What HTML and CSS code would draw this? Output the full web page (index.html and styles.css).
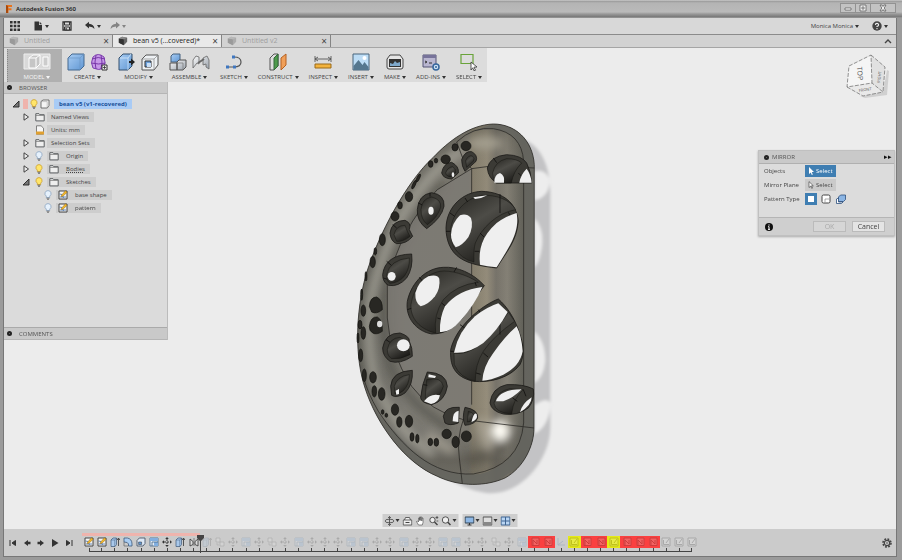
FILE: index.html
```html
<!DOCTYPE html>
<html lang="en">
<head>
<meta charset="utf-8">
<title>Autodesk Fusion 360</title>
<link rel="stylesheet" href="styles.css">
</head>
<body>
<svg class="defs" aria-hidden="true">
  <defs>
    <linearGradient id="blueFace" x1="0" y1="0" x2="1" y2="1"><stop offset="0" stop-color="#a9cdf3"/><stop offset="1" stop-color="#5f96d3"/></linearGradient>
    <linearGradient id="greyFace" x1="0" y1="0" x2="1" y2="1"><stop offset="0" stop-color="#fafafa"/><stop offset="1" stop-color="#9ba3ad"/></linearGradient>
    <symbol id="i-cube" viewBox="0 0 12 12"><path d="M1 3l4-2 6 1v5l-4 4-6-3z" fill="#666"/><path d="M1 3l6 1v7l-6-3z" fill="#333"/><path d="M1 3l4-2 6 1-4 2z" fill="#8a8a8a"/></symbol>
    <symbol id="i-bulb" viewBox="0 0 8 10"><path d="M4 .6a3 3 0 0 1 1.700 5.500V7.500H2.300V6.100A3 3 0 0 1 4 .6z" fill="#ffe56a" stroke="#c7971d" stroke-width=".7"/><path d="M2.500 8.200h3M3 9.300h2" stroke="#555" stroke-width=".8"/></symbol>
    <symbol id="i-bulb-off" viewBox="0 0 8 10"><path d="M4 .6a3 3 0 0 1 1.700 5.500V7.500H2.300V6.100A3 3 0 0 1 4 .6z" fill="#e6f1fc" stroke="#7f9cbb" stroke-width=".7"/><path d="M2.500 8.200h3M3 9.300h2" stroke="#666" stroke-width=".8"/></symbol>
    <symbol id="i-folder" viewBox="0 0 10 10"><path d="M.8 8.900V1.700h3.200l.8 1h4.400v6.200z" fill="#eee" stroke="#5d6063"/><path d="M1 3.500h8" stroke="#777" stroke-width=".7"/></symbol>
    <symbol id="i-doc" viewBox="0 0 10 10"><path d="M1.500 9.200V.8h4.600l2.400 2.400v6z" fill="#f6f6f6" stroke="#666" stroke-width=".8"/><path d="M1 6.500h8V9.500H1z" fill="#e0a030"/></symbol>
    <symbol id="i-component" viewBox="0 0 10 10"><path d="M1 2.500L3 1h6v5.500L7.300 9H1z" fill="#f4f4f4" stroke="#555" stroke-width=".8"/><path d="M1.500 2.600h5.700V9" fill="none" stroke="#999" stroke-width=".5"/></symbol>
    <symbol id="i-open" viewBox="0 0 8 8"><path d="M7 1v6H1z" fill="#777" stroke="#222" stroke-width=".9"/></symbol>
    <symbol id="i-closed" viewBox="0 0 8 8"><path d="M2 .8v6.400L6.500 4z" fill="#eee" stroke="#333" stroke-width=".9"/></symbol>
    <symbol id="t-sketch" viewBox="0 0 10 10"><path d="M1 1h8v8H1z" fill="#f5f5f5" stroke="#444"/><path d="M1.500 4q3-1 4 4M2 7h6" fill="none" stroke="#446fa8" stroke-width=".8"/><path d="M3.500 5.200L7.500.8l1.700 1.400L5.200 6l-2 .8z" fill="#f4b928" stroke="#8a6114" stroke-width=".5"/></symbol>
    <symbol id="t-extrude" viewBox="0 0 10 10"><path d="M1 3l2-2h3.500v6.500L5 9.500H1z" fill="#a9c8ea" stroke="#3d5878" stroke-width=".7"/><path d="M1 3h3.800v6.300M4.800 3l1.700-2" fill="none" stroke="#3d5878" stroke-width=".5"/><path d="M8.500 9V1.500M7.200 3l1.300-2 1.300 2" fill="none" stroke="#333" stroke-width=".8"/></symbol>
    <symbol id="t-fillet" viewBox="0 0 10 10"><path d="M1 1h3.500Q9 2 9 7v2H5.500V7Q5 5 1 5z" fill="#a9cdf3" stroke="#3d5878" stroke-width=".8"/><path d="M1 5v4h4" fill="none" stroke="#666" stroke-width=".7"/></symbol>
    <symbol id="t-shell" viewBox="0 0 10 10"><path d="M1 3.500L3.300 1H9v5.500L7 9H1z" fill="#dbe7f5" stroke="#3d4a5a" stroke-width=".8"/><path d="M2.600 5h3v2.600h-3z" fill="#5f96d3" stroke="#333" stroke-width=".5"/></symbol>
    <symbol id="t-pattern" viewBox="0 0 10 10"><path d="M1 1h8v8H1z" fill="#e5eef8" stroke="#456587" stroke-width=".8"/><path d="M1 1h8v3H1zM5 5h4v4H5z" fill="#82afe0"/><path d="M3 9V5h6" fill="none" stroke="#456587" stroke-width=".8"/></symbol>
    <symbol id="t-move" viewBox="0 0 10 10"><path d="M5 0l1.800 2H3.200zM5 10l1.800-2H3.200zM0 5l2-1.800v3.600zM10 5L8 3.200v3.600z" fill="#333"/><path d="M5 2v6M2 5h6" stroke="#333" stroke-dasharray="2 1"/></symbol>
    <symbol id="t-mirror" viewBox="0 0 10 10"><path d="M1 9V2l3 2.500v3zM9 9V2L6 4.500v3z" fill="#ddd" stroke="#333" stroke-width=".8"/><path d="M5 1v8" stroke="#333" stroke-width=".5"/></symbol>
    <symbol id="t-combine" viewBox="0 0 10 10"><path d="M1 1h4v4H1zM5 5h4v4H5z" fill="#eee" stroke="#555" stroke-width=".8"/><path d="M2 6v2h2" fill="none" stroke="#555" stroke-width=".7"/></symbol>
    <symbol id="t-axis" viewBox="0 0 10 10"><path d="M2 1v7h7M2 8l5-4" fill="none" stroke="#446fa8"/></symbol>
    <symbol id="t-failed" viewBox="0 0 10 10"><path d="M2 1h7v7.500H2z" fill="#ddd" stroke="#333"/><path d="M3 8V3l4 4V3" fill="none" stroke="#333"/></symbol>
    <symbol id="t-plain" viewBox="0 0 10 10"><path d="M1 1h8v8H1z" fill="#f2f2f2" stroke="#333"/><path d="M2.500 3v4.500H8M5 6l3-4" fill="none" stroke="#333"/></symbol>
  </defs>
</svg>

<header class="titlebar">
  <svg class="logo" viewBox="0 0 8 10"><path d="M1 1h6v2H3.500v1.300h3v2h-3V9H1z" fill="#e8731c"/><path d="M1 1l2 1v7L1 9z" fill="#a84a0c"/></svg>
  <h1>Autodesk Fusion 360</h1>
  <div class="winbuttons">
    <button aria-label="Minimize"><svg viewBox="0 0 10 8"><path d="M2 4h6v2H2z" fill="#fff" stroke="#555" stroke-width=".7"/></svg></button>
    <button aria-label="Restore"><svg viewBox="0 0 10 8"><path d="M2 1h6v6H2zM4 3h2v2H4z" fill="#eee" stroke="#555" stroke-width=".7"/></svg></button>
    <button class="close" aria-label="Close"><svg viewBox="0 0 10 8"><path d="M2 1h2l1 1.500L6 1h2L6.200 4 8 7H6L5 5.500 4 7H2l1.800-3z" fill="#eee" stroke="#555" stroke-width=".7"/></svg></button>
  </div>
</header>

<div class="window">
  <nav class="appbar" aria-label="File">
    <button aria-label="Data panel"><svg class="i10" viewBox="0 0 10 10"><path d="M0 0h2.600v2.600H0zM3.700 0h2.600v2.600H3.700zM7.400 0H10v2.600H7.400zM0 3.700h2.600v2.600H0zM3.700 3.700h2.600v2.600H3.700zM7.400 3.700H10v2.600H7.400zM0 7.400h2.600V10H0zM3.700 7.400h2.600V10H3.700zM7.400 7.400H10V10H7.400z" fill="#333"/></svg></button>
    <button aria-label="File"><svg class="i10" viewBox="0 0 10 10"><path d="M1.500.5H6V4h3v5.500H1.500z" fill="#333"/><path d="M6.700.7L9 3.300H6.700z" fill="#333"/></svg><i class="caret"></i></button>
    <button aria-label="Save"><svg class="i10" viewBox="0 0 10 10"><path d="M1 1h8v8H1z" fill="none" stroke="#333" stroke-width="1.300"/><path d="M2.500 1h5v3h-5zM2.500 6h5v3h-5z" fill="#d8d8d8" stroke="#333"/><path d="M3.500 7h1.200v2H3.500z" fill="#333"/></svg></button>
    <div class="history">
      <button aria-label="Undo"><svg class="i10" viewBox="0 0 10 10"><path d="M0 4l4-3.200v2q5 .2 5.500 5.200Q8 5.500 4 5.400v2z" fill="#333"/></svg><i class="caret"></i></button>
      <button class="dim" aria-label="Redo"><svg class="i10" viewBox="0 0 10 10"><path d="M10 4L6 .8v2Q1 3 .5 8 2 5.500 6 5.400v2z" fill="#333"/></svg><i class="caret"></i></button>
    </div>
    <div class="account">
      <button>Monica Monica<i class="caret"></i></button>
      <button aria-label="Help"><svg class="i10" viewBox="0 0 10 10"><circle cx="5" cy="5" r="4.700" fill="#444"/><path d="M3.400 4Q3.400 2.400 5 2.400T6.600 4Q6.600 5 5 5.400V6M5 7v1.200" fill="none" stroke="#eee" stroke-width="1.100"/></svg><i class="caret"></i></button>
    </div>
  </nav>

  <div class="tabs">
    <div class="tab"><svg class="i10"><use href="#i-cube"/></svg><span>Untitled</span><button aria-label="Close tab">×</button></div>
    <div class="tab current"><svg class="i10"><use href="#i-cube"/></svg><span>bean v5 (...covered)*</span><button aria-label="Close tab">×</button></div>
    <div class="tab"><svg class="i10"><use href="#i-cube"/></svg><span>Untitled v2</span><button aria-label="Close tab">×</button></div>
    <button class="collapse" aria-label="Collapse toolbar"><svg viewBox="0 0 8 6"><path d="M1 5l3-3 3 3" fill="none" stroke="#444" stroke-width="1.400"/></svg></button>
  </div>

  <main class="canvas">
    <svg class="scene" viewBox="4 48 892 481" role="img" aria-label="Bean model">
      <defs>
        <linearGradient id="metal" x1="0" y1="0" x2="555" y2="0" gradientUnits="userSpaceOnUse">
          <stop offset="0" stop-color="#5f5e57"/><stop offset=".3" stop-color="#7b7972"/><stop offset=".64" stop-color="#7c7970"/><stop offset=".66" stop-color="#857e6c"/><stop offset=".74" stop-color="#958d7b"/><stop offset=".79" stop-color="#77736a"/><stop offset=".85" stop-color="#858176"/><stop offset=".93" stop-color="#63625a"/><stop offset="1" stop-color="#63635c"/>
        </linearGradient>
        <linearGradient id="endShade" x1="0" y1="18" x2="0" y2="1100" gradientUnits="userSpaceOnUse">
          <stop offset="0" stop-color="#4f4d45" stop-opacity=".45"/><stop offset=".1" stop-color="#6e6a5e" stop-opacity=".1"/><stop offset=".82" stop-color="#777" stop-opacity="0"/><stop offset=".93" stop-color="#4a4841" stop-opacity=".45"/><stop offset="1" stop-color="#55534b" stop-opacity=".3"/>
        </linearGradient>
        <linearGradient id="bore" x1="0" y1="0" x2=".6" y2="1"><stop offset="0" stop-color="#24231f"/><stop offset=".45" stop-color="#4d4c47"/><stop offset="1" stop-color="#1d1c19"/></linearGradient>
        <filter id="soft" x="-50%" y="-50%" width="200%" height="200%"><feGaussianBlur stdDeviation="13"/></filter>
        <filter id="edge"><feGaussianBlur stdDeviation="4"/></filter>
        <path id="outline" d="M553 140C548 65 495 18 430 18C360 20 295 70 250 118C170 190 85 350 48 470C15 590 15 720 45 810C80 920 165 1035 262 1075C330 1108 410 1105 465 1080C520 1050 552 985 552 930Z"/>
        <clipPath id="bodyClip"><use href="#outline"/></clipPath>
      </defs>
      <g transform="translate(350 118) scale(.3333)">
        <g filter="url(#edge)">
          <path d="M500 60C575 70 602 150 601 230V930C600 1020 520 1128 420 1126C360 1122 300 1090 270 1060L540 950Z" fill="#c3c3c5"/>
          <path d="M553 160Q590 150 600 190Q595 240 553 247ZM553 300Q582 330 576 385Q570 430 553 450ZM553 640Q586 670 586 730Q580 780 553 795ZM553 862Q590 835 602 855Q598 925 553 948Z" fill="#ededed"/>
        </g>
        <g clip-path="url(#bodyClip)">
          <path d="M0 0h560v1120H0z" fill="url(#metal)"/>
          <path d="M0 0h560v1120H0z" fill="url(#endShade)"/>
          <g filter="url(#soft)" fill="none">
            <path d="M340 95Q240 150 150 300Q90 420 62 540Q45 660 75 790Q130 930 250 1010" stroke="#a9a89c" stroke-width="24" opacity=".8"/>
            <path d="M280 190Q160 320 105 480Q90 620 120 740Q170 860 300 930" stroke="#4a4941" stroke-width="20" opacity=".65"/>
            <path d="M330 60Q200 160 110 330Q40 480 26 600Q22 720 60 820" stroke="#45443d" stroke-width="12" opacity=".7"/>
            <path d="M350 1025Q450 1010 490 940" stroke="#55524a" stroke-width="30" opacity=".7"/>
            <path d="M395 900Q400 980 430 990M230 950l80 50" stroke="#b3aea0" stroke-width="26" opacity=".7"/>
            <ellipse cx="450" cy="938" rx="28" ry="32" fill="#fffdf5"/>
            <ellipse cx="405" cy="75" rx="55" ry="20" fill="#aaa596" opacity=".8"/>
          </g>
          <path d="M365 150L262 215Q150 330 112 500V600Q118 700 185 805Q240 880 340 905L365 860Z" fill="#7e7b75" opacity=".7"/>
          <path d="M520 125V920Q505 1040 390 1068Q280 1080 180 990L60 860L150 1060L400 1120L570 1000V60L450 10L340 50Q430 18 480 50Q520 80 520 125Z" fill="#65655f" opacity=".85"/>
        </g>
        <g fill="none" stroke="#2c2b27" stroke-width="2.400">
          <use href="#outline"/>
          <path d="M320 72Q370 25 430 32Q515 45 521 130V915Q510 1045 370 1068C245 1075 155 985 85 880Q50 820 40 775M365 152L425 144L553 150M365 152V860M320 72L340 125L365 152L262 215Q150 330 112 500V600Q118 700 185 805Q240 880 340 905L552 930M340 905Q320 960 328 1020L337 1097"/>
        </g>
        <g fill="#3b3a35" stroke="#1d1c19" stroke-width="2.500">
          <path d="M288 330C290 265 340 222 395 220C460 222 500 255 505 310C500 370 470 400 440 450C400 445 360 440 330 420C300 400 288 365 288 330Z"/>
          <path d="M403 503C370 465 320 445 280 448C230 450 185 490 172 550C165 600 200 640 245 648C290 648 320 625 345 590C370 560 380 530 403 503Z"/>
          <path d="M445 543C400 560 320 620 302 695C300 740 310 775 370 790C420 795 480 780 510 740C525 710 520 680 510 650C495 600 470 565 445 543Z"/>
          <path d="M412 150Q420 115 470 110Q515 112 530 135Q543 160 545 195H440Q415 180 412 150Z"/>
          <path d="M420 855Q425 810 470 800Q520 798 550 813Q555 845 535 870Q500 895 460 888Q425 880 420 855Z"/>
          <path d="M202 275Q205 230 245 224Q285 230 282 265Q275 300 230 332Q200 310 202 275Z"/>
          <path d="M120 345Q125 308 165 307Q185 315 178 335L188 355Q170 378 140 377Q122 370 120 345Z"/>
          <path d="M275 165Q280 135 305 133Q328 145 325 165L305 183Q280 182 275 165Z"/>
          <path d="M335 125Q345 98 365 101Q385 112 378 130L345 160Q335 145 335 125Z"/>
          <path d="M98 470Q105 410 185 408Q190 450 170 480Q145 508 115 502Q98 492 98 470Z"/>
          <path d="M98 690Q105 645 150 645Q180 655 178 670Q188 690 187 715Q150 740 120 730Q98 715 98 690Z"/>
          <path d="M122 805Q125 760 187 757Q190 800 165 825Q140 842 125 832Z"/>
          <path d="M232 762Q290 765 292 805Q285 850 245 860Q215 855 212 840Q215 800 232 762Z"/>
          <path d="M280 895Q285 865 328 868L325 915Q300 925 285 915Z"/>
          <path d="M345 868Q385 875 383 900Q375 920 345 922Q335 900 345 868Z"/>
        </g>
        <g fill="url(#bore)" stroke="#151411" stroke-width="1.500">
          <path d="M302 335C308 280 350 240 395 232C440 230 480 245 497 275C440 285 395 330 376 375Q370 395 372 432Q335 425 310 385Q302 365 302 335Z"/>
          <path d="M385 493C350 470 300 455 270 460C225 468 190 510 183 560C180 600 210 635 257 645Q250 590 280 545Q320 500 385 493Z"/>
          <path d="M312 706Q350 712 390 680Q440 640 475 582L494 610Q430 655 400 700Q375 740 376 790Q330 780 313 740Z"/>
          <path d="M428 165Q435 130 470 122Q500 122 515 135Q490 160 484 195H437Q428 185 428 165Z"/>
          <path d="M432 855Q440 820 480 812L520 815Q490 840 485 888Q435 885 432 855Z"/>
          <path d="M213 275Q215 242 245 237Q275 245 272 268Q262 300 232 320Q213 305 213 275Z"/>
          <path d="M132 350Q138 322 165 322L172 340L180 355Q160 372 140 370Z"/>
          <path d="M287 165Q292 148 308 146Q320 155 316 165L303 176Q290 177 287 165Z"/>
          <path d="M347 128Q355 110 367 114Q376 122 370 130L350 148Z"/>
          <path d="M110 470Q120 425 178 420Q180 450 163 475Q145 495 120 496Q110 490 110 470Z"/>
          <path d="M112 695Q118 660 150 658Q172 665 180 710Q150 725 125 722Q112 715 112 695Z"/>
          <path d="M133 805Q140 775 178 770Q178 800 160 818Q145 830 135 828Z"/>
          <path d="M230 785Q275 775 280 805Q270 840 245 850Q225 850 226 835Z"/>
          <path d="M355 880Q375 885 374 900Q365 912 352 912Z"/>
        </g>
        <path d="M450 228V285M300 285l14 10M345 240l8 12M288 340h14M390 345l12 12M374 400h14M475 283l6 10M208 478l12 14M172 575l12-4M320 448l-8 14M275 555l14 12M375 492l4 12M262 600l12 4M330 620l14 10M302 700h12M385 575l8 12M450 605V650M400 705l14 12M378 765l14 4M505 165l10 10M488 840l14 10M430 120l10 14M110 430l14 12M100 480l12 4M205 255l12 6M240 224v12M128 320l12 10M108 665l12 8M220 800l12 2M520 815l8 20" fill="none" stroke="#11100e" stroke-width="2.500"/>
        <g fill="#efefef">
          <path d="M303 350Q305 315 330 292Q350 285 363 300Q372 325 355 358Q335 385 317 388Q303 370 303 350Z"/>
          <path d="M500 285C510 340 480 385 440 448Q410 445 390 440C385 395 395 355 440 315Q470 293 500 285Z"/>
          <path d="M370 238L412 232Q395 242 375 243Z"/>
          <path d="M235 475Q262 468 268 482Q272 510 255 535Q235 560 212 565Q195 555 196 525Q205 490 235 475Z"/>
          <path d="M397 507Q375 560 330 610Q300 645 270 642Q268 600 285 565Q325 515 397 507Z"/>
          <path d="M445 556L473 582Q445 635 400 675Q355 708 312 704Q325 640 375 595Q410 567 445 556Z"/>
          <path d="M500 625Q515 655 518 700Q510 745 460 770Q420 788 397 788Q400 745 430 705Q465 655 500 625Z"/>
          <path d="M433 194Q432 170 450 165Q465 172 462 194ZM508 194Q512 170 530 152Q543 170 545 194Z"/>
          <path d="M438 850Q448 815 515 814Q490 840 460 850ZM510 883Q516 857 545 838Q545 862 510 883Z"/>
          <ellipse cx="243" cy="278" rx="8" ry="12"/><ellipse cx="309" cy="170" rx="4" ry="7"/><ellipse cx="125" cy="475" rx="12" ry="13"/><ellipse cx="160" cy="682" rx="19" ry="18"/>
          <path d="M137 818l10-5v15l-8 2zM222 850Q240 825 270 832Q265 855 243 858ZM236 769l22 5-3 6-20-2zM308 910Q308 880 326 878L325 912ZM365 910Q372 880 380 888Q385 905 365 912Z"/>
        </g>
        <g fill="#282723" stroke="#11100e" stroke-width="2">
          <ellipse cx="315" cy="88" rx="9" ry="11"/><ellipse cx="348" cy="84" rx="15" ry="14"/><ellipse cx="287" cy="124" rx="14" ry="13"/><ellipse cx="258" cy="128" rx="5" ry="7"/><ellipse cx="242" cy="138" rx="7" ry="10"/>
          <ellipse cx="205" cy="180" rx="4" ry="13" transform="rotate(25 205 180)"/><ellipse cx="192" cy="200" rx="4" ry="14" transform="rotate(25 192 200)"/><ellipse cx="177" cy="236" rx="11" ry="15"/><ellipse cx="150" cy="262" rx="7" ry="11"/><ellipse cx="135" cy="295" rx="12" ry="14"/>
          <ellipse cx="97" cy="365" rx="9" ry="18"/><ellipse cx="76" cy="400" rx="4" ry="11"/><ellipse cx="68" cy="432" rx="8" ry="17"/><ellipse cx="48" cy="475" rx="3" ry="14"/><ellipse cx="35" cy="530" rx="3" ry="17"/>
          <path d="M58 565Q60 537 80 537Q98 545 97 575Q80 590 65 582ZM58 625Q62 595 82 597Q98 605 97 640Q80 652 68 645Q58 640 58 625Z"/>
          <ellipse cx="40" cy="578" rx="7" ry="17"/><ellipse cx="30" cy="620" rx="6" ry="13"/><ellipse cx="40" cy="645" rx="7" ry="19"/><ellipse cx="24" cy="660" rx="3" ry="15"/><ellipse cx="32" cy="712" rx="6" ry="19"/>
          <ellipse cx="43" cy="772" rx="6" ry="19"/><ellipse cx="69" cy="778" rx="10" ry="17"/><ellipse cx="73" cy="820" rx="7" ry="17"/><ellipse cx="95" cy="828" rx="10" ry="19"/><ellipse cx="135" cy="875" rx="11" ry="17"/><ellipse cx="98" cy="882" rx="4" ry="7"/><ellipse cx="109" cy="892" rx="4" ry="6"/>
          <ellipse cx="148" cy="912" rx="8" ry="16"/><ellipse cx="177" cy="910" rx="11" ry="18"/><ellipse cx="186" cy="957" rx="6" ry="13"/><ellipse cx="202" cy="962" rx="5" ry="13"/><ellipse cx="241" cy="972" rx="7" ry="11"/><ellipse cx="259" cy="973" rx="7" ry="12"/><ellipse cx="290" cy="948" rx="14" ry="14"/><ellipse cx="317" cy="972" rx="11" ry="17"/><ellipse cx="349" cy="955" rx="15" ry="16"/>
        </g>
        <ellipse cx="89" cy="618" rx="8" ry="10" fill="#ddd"/>
      </g>
    </svg>

    <div class="ribbon">
      <button class="workspace-switch"><svg viewBox="0 0 28 18"><path d="M1 2h26v15H1z" fill="#d9d9d9" stroke="#eee"/><path d="M6 6l4-3h7v9l-4 4H6zM6 6h7v10M13 6l4-3" fill="#c5c5c5" stroke="#fff"/><path d="M20 5h5v9h-5z" fill="#ccc" stroke="#fff"/></svg><span>MODEL<i class="caret"></i></span></button>
      <div class="groups">
        <button class="group"><span class="icons"><svg viewBox="0 0 18 18"><path d="M1 5l4-4h12v12l-4 4H1z" fill="url(#blueFace)" stroke="#44688f"/><path d="M1 5h12v12M13 5l4-4" fill="none" stroke="#6b95c4" stroke-width=".7"/></svg><svg viewBox="0 0 18 18"><path d="M3 4q5-5 11 0 2 5 0 11-5 3-11 0Q0 10 3 4z" fill="#c799e8" stroke="#7d3fae"/><path d="M2 6q6-3 13 0M1.500 10q7 2 14 0M6 2q-2 7 0 14M11 2q2 7 0 14" fill="none" stroke="#7736a8"/><path d="M12 12h5v5h-5z" fill="#eee" stroke="#333"/><path d="M14.500 13v3M13 14.500h3" stroke="#333" stroke-width=".8"/></svg></span><span>CREATE<i class="caret"></i></span></button>
        <button class="group"><span class="icons"><svg viewBox="0 0 18 18"><path d="M1 5l4-4h9v12l-4 4H1z" fill="url(#blueFace)" stroke="#35516f"/><path d="M2 5h8v12M10 5l3-4" fill="none" stroke="#d6e8fa" stroke-width=".8"/><path d="M11 8h2V5.500L17 9l-4 3.500V10h-2z" fill="#222"/></svg><svg viewBox="0 0 18 18"><path d="M1 6l4-4h12v10l-4 5H1z" fill="#eef1f4" stroke="#555"/><path d="M1 6h12v11M13 6l4-4" fill="none" stroke="#888" stroke-width=".7"/><path d="M4 8h6v6H4z" fill="#6ba0dc" stroke="#333"/><path d="M6 10h4v4H6z" fill="#c9def5"/></svg></span><span>MODIFY<i class="caret"></i></span></button>
        <button class="group"><span class="icons"><svg viewBox="0 0 18 18"><path d="M2 3l2-2h7v6l-2 2H2z" fill="url(#blueFace)" stroke="#44607f"/><path d="M1 10h7v7H1zM8 9l2-2h7v7l-3 3H8z" fill="url(#greyFace)" stroke="#555"/><path d="M8 10h6v7" fill="none" stroke="#777" stroke-width=".7"/></svg><svg viewBox="0 0 18 18"><path d="M1 15V7l3-4 3 1v7l-2-1zM11 12V5l4-2 2 4v9l-3-2v-3z" fill="url(#greyFace)" stroke="#666" stroke-width=".8"/><path d="M6 10l6-4" stroke="#666" stroke-width="2"/></svg></span><span>ASSEMBLE<i class="caret"></i></span></button>
        <button class="group"><svg viewBox="0 0 18 18"><path d="M2 14h7q7 0 7-5t-7-5" fill="none" stroke="#555" stroke-width="1.200"/><path d="M1 12.500h3v3H1zM8 12.500h3v3H8zM7 2.500h3v3H7z" fill="#3f77c0"/></svg><span>SKETCH<i class="caret"></i></span></button>
        <button class="group"><svg viewBox="0 0 18 18"><path d="M1 5l4-4h4v12l-4 4H1z" fill="#ddd" stroke="#555"/><path d="M5 5l4-4v12l-4 4z" fill="#4d9a4b" stroke="#33683a"/><path d="M12 5l5-4v11l-5 5z" fill="#f0a05a" stroke="#b66020"/></svg><span>CONSTRUCT<i class="caret"></i></span></button>
        <button class="group"><svg viewBox="0 0 18 18"><path d="M1 6h16M1 3v6M17 3v6M4 4L1 6l3 2M14 4l3 2-3 2" fill="none" stroke="#555" stroke-width=".9"/><path d="M1 11h16v4H1z" fill="#f3b33d" stroke="#9a6b1a"/></svg><span>INSPECT<i class="caret"></i></span></button>
        <button class="group"><svg viewBox="0 0 18 18"><path d="M1 1h16v16H1z" fill="#bcdcf5" stroke="#49657d"/><path d="M1.500 13l5-6 4 5 2-3 4 5v3h-15z" fill="#55778f"/><circle cx="12.500" cy="5" r="2" fill="#fff"/></svg><span>INSERT<i class="caret"></i></span></button>
        <button class="group"><svg viewBox="0 0 18 18"><path d="M4 2h10l3 4v8q0 2-2 2H3q-2 0-2-2V6z" fill="#e5e5e5" stroke="#444"/><path d="M3 6h12v8H3z" fill="#333"/><path d="M4 13v-3l3 1 2-3 2 2 3-1v4z" fill="#7fa9cc"/></svg><span>MAKE<i class="caret"></i></span></button>
        <button class="group"><svg viewBox="0 0 18 18"><path d="M1 2h13v12H1z" fill="#b9b6d0" stroke="#555577"/><path d="M1 2h13v3H1z" fill="#77739a"/><path d="M3 8l2 1-2 1M7 10h3" fill="none" stroke="#333"/><circle cx="14" cy="14" r="3" fill="#cfe1f4" stroke="#36669d" stroke-width="1.500"/><circle cx="14" cy="14" r="1" fill="#36669d"/></svg><span>ADD-INS<i class="caret"></i></span></button>
        <button class="group"><svg viewBox="0 0 18 18"><path d="M1 1.500h12v9H1z" fill="none" stroke="#69a33a" stroke-width="1.200"/><path d="M11 9l6 5-3 .2 1.500 3-1.500.6-1.300-3L11 17z" fill="#fff" stroke="#333" stroke-width=".8"/></svg><span>SELECT<i class="caret"></i></span></button>
      </div>
    </div>

    <svg class="viewcube" viewBox="845 50 46 50" role="img" aria-label="View cube">
      <path d="M860 96l23-4 4-22 2 1-2 24-22 3z" fill="#c5c5c5" opacity=".7"/>
      <path d="M849 66l22-11 1 28-25 4z" fill="#f5f5f5"/><path d="M871 55l14 12-2 25-11-9z" fill="#e1e1e1"/><path d="M847 87l25-4 11 9-20 4z" fill="#e9e9e9"/>
      <path d="M849 66l22-11 1 28-25 4zM871 55l14 12-2 25-11-9M847 87l16 9 20-4" fill="none" stroke="#777" stroke-width=".8" stroke-dasharray="4 1.500"/>
      <text x="857" y="67" class="face" transform="rotate(85 857 67)">TOP</text>
      <text x="880" y="83" class="face small" transform="rotate(-83 880 83)">RIGHT</text>
      <text x="859" y="92" class="face small" transform="rotate(-8 859 92)">FRONT</text>
    </svg>

    <div class="workspace">
      <aside class="browser">
        <h2><i class="dot"></i>BROWSER</h2>
        <ul class="tree">
          <li class="root"><svg class="i8"><use href="#i-open"/></svg><span class="mark"></span><svg class="bulb"><use href="#i-bulb"/></svg><svg class="i10"><use href="#i-component"/></svg><b>bean v5 (v1-recovered)</b></li>
          <li><svg class="i8"><use href="#i-closed"/></svg><span class="item"><svg class="i10"><use href="#i-folder"/></svg>Named Views</span></li>
          <li><i class="i8"></i><span class="item"><svg class="i10"><use href="#i-doc"/></svg>Units: mm</span></li>
          <li><svg class="i8"><use href="#i-closed"/></svg><span class="item"><svg class="i10"><use href="#i-folder"/></svg>Selection Sets</span></li>
          <li><svg class="i8"><use href="#i-closed"/></svg><span class="item"><svg class="bulb"><use href="#i-bulb-off"/></svg><svg class="i10"><use href="#i-folder"/></svg>Origin</span></li>
          <li><svg class="i8"><use href="#i-closed"/></svg><span class="item"><svg class="bulb"><use href="#i-bulb"/></svg><svg class="i10"><use href="#i-folder"/></svg><span class="dotted">Bodies</span></span></li>
          <li><svg class="i8"><use href="#i-open"/></svg><span class="item"><svg class="bulb"><use href="#i-bulb"/></svg><svg class="i10"><use href="#i-folder"/></svg>Sketches</span></li>
          <li class="leaf"><span class="item"><svg class="bulb"><use href="#i-bulb-off"/></svg><svg class="i10"><use href="#t-sketch"/></svg>base shape</span></li>
          <li class="leaf"><span class="item"><svg class="bulb"><use href="#i-bulb-off"/></svg><svg class="i10"><use href="#t-sketch"/></svg>pattern</span></li>
        </ul>
        <h2 class="comments"><i class="dot"></i>COMMENTS</h2>
      </aside>

      <section class="dialog" aria-label="Mirror">
        <h2><i class="dot"></i>MIRROR<span class="more">▸▸</span></h2>
        <div class="fields">
          <span>Objects</span>
          <button class="pick active"><svg viewBox="0 0 6 8"><path d="M1 0l5 5H3.800l1 2.500-1 .4-1-2.500L1 7z" fill="#fff"/></svg>Select</button>
          <span>Mirror Plane</span>
          <button class="pick"><svg viewBox="0 0 6 8"><path d="M1 .6l4.300 4.200H3.500l1 2.300-.8.300-1-2.300L1 6.500z" fill="#fff" stroke="#333" stroke-width=".6"/></svg>Select</button>
          <span>Pattern Type</span>
          <span class="types">
            <button class="active" aria-label="Faces"><svg viewBox="0 0 12 12"><path d="M3 3h6v6H3z" fill="#fff"/></svg></button>
            <button aria-label="Bodies"><svg viewBox="0 0 12 12"><rect x="2" y="2" width="8" height="8" rx="1.500" fill="#fff" stroke="#444"/><path d="M5 9V6h4" fill="none" stroke="#888" stroke-width=".7"/></svg></button>
            <button aria-label="Features"><svg viewBox="0 0 12 12"><path d="M3.500 4l2-2h5v4.500l-2 2h-5z" fill="#8bb5e4" stroke="#2c4f7c" stroke-width=".8"/><path d="M1.500 6v4.500h5l1.500-1.500H3.500V5z" fill="#fff" stroke="#2c4f7c" stroke-width=".8"/></svg></button>
          </span>
        </div>
        <footer>
          <svg class="i8" viewBox="0 0 8 8"><circle cx="4" cy="4" r="4" fill="#111"/><path d="M4 1.400v1.200M3.200 3.600H4v2.600M3 6.400h2" stroke="#fff" fill="none"/></svg>
          <button disabled>OK</button>
          <button>Cancel</button>
        </footer>
      </section>
    </div>

    <div class="viewbar">
      <div>
        <button aria-label="Orbit"><svg class="i10" viewBox="0 0 10 10"><path d="M5 .5v9M3.500 2L5 .5 6.500 2M3.500 8L5 9.500 6.500 8" fill="none" stroke="#444" stroke-width=".8"/><ellipse cx="5" cy="5" rx="4.500" ry="1.800" fill="none" stroke="#444" stroke-width=".8"/></svg><i class="caret"></i></button>
        <button aria-label="Look at"><svg class="i10" viewBox="0 0 10 10"><path d="M.7 4h8.600v5H.7zM2 4l1-2.500h4L8 4" fill="#eee" stroke="#444" stroke-width=".8"/><path d="M3 6.500h4" stroke="#444"/></svg></button>
        <button aria-label="Pan"><svg class="i10" viewBox="0 0 10 10"><path d="M3 9L1 5.500l1-.5 1 1V2h1v2.500V1h1.200v3.500V1h1.100v4l.2-3h1v4.500L6.800 9z" fill="#fff" stroke="#444" stroke-width=".6"/></svg></button>
        <button aria-label="Zoom"><svg class="i10" viewBox="0 0 10 10"><circle cx="4" cy="4" r="2.700" fill="#eee" stroke="#444" stroke-width=".9"/><path d="M6 6l3 3" stroke="#444" stroke-width="1.400"/><path d="M8.500 0v3M7 1.500h3M8 5h2" stroke="#444" stroke-width=".8"/></svg></button>
        <button aria-label="Fit"><svg class="i10" viewBox="0 0 10 10"><circle cx="4" cy="4" r="3.200" fill="#eee" stroke="#444" stroke-width=".9"/><path d="M6.300 6.300L9 9" stroke="#444" stroke-width="1.500"/></svg><i class="caret"></i></button>
      </div>
      <div>
        <button aria-label="Display settings"><svg class="i10" viewBox="0 0 10 10"><path d="M.6 1h8.800v6H.6z" fill="#8fb8e5" stroke="#345"/><path d="M5 7v2M3 9h4" stroke="#333"/></svg><i class="caret"></i></button>
        <button aria-label="Grid settings"><svg class="i10" viewBox="0 0 10 10"><path d="M.6 1h8.800v8H.6z" fill="#ddd" stroke="#555"/><path d="M1 6h8v3H1z" fill="#888"/></svg><i class="caret"></i></button>
        <button aria-label="Viewports"><svg class="i10" viewBox="0 0 10 10"><path d="M.6 1h8.800v8H.6z" fill="#b9d5f3" stroke="#3e6593"/><path d="M5 1v8M1 5h8" stroke="#3e6593"/></svg><i class="caret"></i></button>
      </div>
    </div>
  </main>

  <footer class="timeline">
    <div class="playback">
      <button aria-label="To start"><svg viewBox="0 0 8 8"><path d="M1 1v6M6.500 1.500v5L3 4z" fill="#333" stroke="#333"/></svg></button>
      <button aria-label="Step back"><svg viewBox="0 0 8 8"><path d="M1 4l4-3v1.800h2.500v2.400H5V7z" fill="#333"/></svg></button>
      <button aria-label="Step forward"><svg viewBox="0 0 8 8"><path d="M7 4L3 1v1.800H.5v2.400H3V7z" fill="#333"/></svg></button>
      <button aria-label="Play"><svg viewBox="0 0 8 8"><path d="M1 0l6.500 4L1 8z" fill="#333"/></svg></button>
      <button aria-label="To end"><svg viewBox="0 0 8 8"><path d="M7 1v6M1.500 1.500v5L5 4z" fill="#333" stroke="#333"/></svg></button>
    </div>
    <div class="steps" id="steps"></div>
    <button class="settings" aria-label="Timeline settings"><svg class="i10" viewBox="0 0 10 10"><circle cx="5" cy="5" r="4" fill="none" stroke="#444" stroke-width="1.600" stroke-dasharray="1.800 1.340"/><circle cx="5" cy="5" r="2.700" fill="#ccc" stroke="#444" stroke-width="1.200"/><circle cx="5" cy="5" r=".8" fill="#444"/></svg></button>
  </footer>
</div>
<script src="timeline.js"></script>
</body>
</html>
```
FILE: styles.css
```css
* { box-sizing: border-box; }
body {
  margin: 0;
  min-height: 100vh;
  display: flex;
  flex-direction: column;
  background: #9b9b9b;
  color: #444;
  font: 6px/8px "Open Sans", "Noto Sans", sans-serif;
}
button {
  margin: 0;
  padding: 0;
  border: 0;
  background: none;
  color: inherit;
  font: inherit;
  display: flex;
  align-items: center;
}
svg { display: block; }
h1, h2 { margin: 0; font: inherit; }
.defs { position: absolute; width: 0; height: 0; }
.i10 { width: 10px; height: 10px; flex: none; }
.i8 { width: 8px; height: 8px; flex: none; }
.bulb { width: 8px; height: 10px; flex: none; }
.caret {
  display: inline-block;
  margin-left: 2px;
  border: 2px solid transparent;
  border-top: 3px solid #333;
  border-bottom: 0;
  vertical-align: middle;
}

.titlebar {
  height: 18px;
  display: flex;
  align-items: center;
  padding: 0 6px 0 5px;
  background: linear-gradient(#e0e0e0 0, #999 1px, #b4b4b4 3px, #bababa 12px, #999 14px, #777 17px, #aaa);
}
.logo { width: 8px; height: 10px; margin-right: 3px; }
.titlebar h1 { font-weight: 600; line-height: 10px; color: #111; }
.winbuttons {
  display: flex;
  align-self: flex-start;
  margin: 3px 0 0 auto;
  border: 1px solid #929292;
  background: #c3c3c3;
}
.winbuttons button { width: 15px; height: 8px; justify-content: center; border-right: 1px solid #929292; }
.winbuttons .close { width: 24px; border: 0; }
.winbuttons svg { width: 10px; height: 8px; }

.window {
  flex: 1;
  display: flex;
  flex-direction: column;
  margin: 0 5px 3px 3px;
  border: solid #777;
  border-width: 0 1px 1px;
}
.appbar {
  height: 16px;
  display: flex;
  align-items: center;
  gap: 13px;
  padding: 0 8px 0 6px;
  background: #d8d8d8;
}
.history { display: flex; gap: 9px; }
.dim { opacity: .5; }
.account { display: flex; gap: 13px; margin-left: auto; color: #444; }

.tabs {
  height: 14px;
  display: flex;
  border-top: 1px solid #8b8b8b;
  border-bottom: 1px solid #a5a5a5;
  background: #d2d2d2;
}
.tab {
  width: 109px;
  display: flex;
  align-items: center;
  gap: 5px;
  padding: 0 3px 0 5px;
  border-right: 1px solid #858585;
  color: #a0a0a0;
  font-size: 7px;
}
.tab.current { background: #e9e9e9; color: #222; }
.tab > svg { opacity: .35; }
.tab.current > svg { opacity: 1; }
.tab button { margin-left: auto; color: #444; font-size: 10px; line-height: 8px; }
.collapse { margin: 0 4px 0 auto; }
.collapse svg { width: 8px; height: 6px; }

.canvas {
  position: relative;
  flex: 1;
  display: flex;
  flex-direction: column;
  background: #ececec;
}
.scene { position: absolute; inset: 0; width: 100%; height: 100%; }
.viewcube { position: absolute; top: 2px; right: 5px; width: 46px; height: 50px; }
.face { font-size: 7px; fill: #555; }
.face.small { font-size: 4px; }

.ribbon {
  position: relative;
  align-self: flex-start;
  display: flex;
  padding: 1px 5px 0 3px;
  height: 34px;
  background: #dcdcdc;
}
.workspace-switch {
  width: 55px;
  flex-direction: column;
  justify-content: space-between;
  padding: 3px 0 1px 4px;
  background: #b0b0b0;
  border-left: 1px dotted #888;
  color: #f5f5f5;
}
.workspace-switch svg { width: 28px; height: 18px; }
.workspace-switch .caret { border-top-color: #f5f5f5; }
.groups { display: flex; gap: 10px; padding-left: 5px; }
.group { flex-direction: column; justify-content: space-between; padding: 4px 0 1px; }
.group svg { width: 18px; height: 18px; }
.icons { display: flex; gap: 5px; }

.workspace {
  position: relative;
  flex: 1;
  display: flex;
  justify-content: space-between;
  align-items: flex-start;
}
.browser {
  width: 164px;
  background: #dbdbdb;
  border-right: 1px solid #bbb;
}
.browser h2 {
  height: 12px;
  display: flex;
  align-items: center;
  gap: 7px;
  padding-left: 3px;
  background: #c9c9c9;
  border-bottom: 1px solid #b5b5b5;
  color: #555;
}
.browser .comments { height: 13px; border-top: 1px solid #aaa; }
.dot { width: 5px; height: 5px; flex: none; border-radius: 50%; background: #777; border: 2px solid #222; }
.tree { margin: 0; padding: 3px 0 0; min-height: 233px; list-style: none; }
.tree li { height: 13px; display: flex; align-items: center; gap: 5px; padding-left: 18px; }
.tree .root { gap: 2px; padding-left: 8px; }
.tree .leaf { padding-left: 40px; }
.mark { width: 5px; height: 10px; margin-left: 1px; background: #efb4ad; }
.tree b {
  margin-left: 2px;
  padding: 1px 5px;
  background: #a9cbf5;
  color: #164f99;
}
.item { display: flex; align-items: center; gap: 6px; padding-right: 5px; background: linear-gradient(#cdcdcd, #cdcdcd) right / calc(100% - 12px) 100% no-repeat; }
.item .bulb + .i10 { margin-right: 1px; }
.dotted { text-decoration: underline dotted 1px; }

.dialog {
  width: 137px;
  margin: 68px 1px 0 0;
  background: #dcdcdc;
  border: 1px solid #c0c0c0;
  box-shadow: 0 1px 2px #aaa;
}
.dialog h2 {
  height: 13px;
  display: flex;
  align-items: center;
  gap: 3px;
  padding: 0 2px 0 5px;
  background: #c9c9c9;
  border-bottom: 1px solid #b0b0b0;
  color: #555;
}
.more { margin-left: auto; color: #111; font-size: 7px; }
.fields {
  display: grid;
  grid-template-columns: 41px auto;
  grid-auto-rows: 12px;
  row-gap: 2px;
  align-items: center;
  justify-content: start;
  padding: 1px 5px 12px;
}
.pick { width: 31px; height: 12px; gap: 2px; padding-left: 3px; background: #cacaca; }
.pick svg { width: 6px; height: 8px; }
.pick.active { background: #3f7eb2; color: #fff; }
.types { display: flex; gap: 3px; }
.types button { width: 12px; height: 12px; }
.types svg { width: 12px; height: 12px; }
.types .active { background: #3f7eb2; }
.dialog footer {
  display: flex;
  align-items: center;
  gap: 6px;
  height: 18px;
  padding: 0 9px 0 6px;
  background: #cfcfcf;
  border-top: 1px solid #b5b5b5;
}
.dialog footer svg { margin-right: auto; }
.dialog footer button { width: 33px; height: 11px; justify-content: center; background: #e4e4e4; border: 1px solid #bbb; font-size: 7px; }
.dialog footer button:disabled { color: #aaa; background: #d6d6d6; }

.viewbar {
  position: absolute;
  bottom: 2px;
  left: 50%;
  translate: -50%;
  display: flex;
  gap: 4px;
}
.viewbar div { display: flex; align-items: center; gap: 3px; height: 13px; padding: 0 2px; background: #cecece; }
.viewbar .caret { margin-left: 1px; }

.timeline {
  height: 27px;
  display: flex;
  align-items: center;
  padding: 0 4px 0 5px;
  background: #cbcbcb;
}
.playback { display: flex; gap: 6px; }
.playback svg { width: 8px; height: 8px; }
.steps {
  width: 617px;
  margin-left: 9px;
  display: grid;
  grid-auto-flow: column;
  grid-auto-columns: 1fr;
}
.step { position: relative; height: 19px; display: flex; flex-direction: column; align-items: center; border-top: 3px solid transparent; }
.step.done { border-top-color: #efb4ad; }
.step .tile { width: 100%; height: 12px; display: flex; align-items: center; justify-content: center; }
.step.faded svg { opacity: .22; }
.step .tick { width: 100%; height: 4px; border-bottom: 1px solid #444; background: linear-gradient(#444, #444) center / 1px 100% no-repeat; }
.step:first-child .tick { align-self: flex-end; width: 50%; background-position: left; }
.step:last-child .tick { align-self: flex-start; width: 50%; background-position: right; }
.error .tile { background: #fa4040; }
.warning .tile { background: #e6ea16; }
.marker { position: absolute; top: -1px; right: -4px; width: 7px; height: 18px; }
.settings { margin-left: auto; }
```
FILE: timeline.js
```js
// Feature history, one letter per step
const kinds = {
  k: 'sketch', e: 'extrude', f: 'fillet', s: 'shell', p: 'pattern', m: 'move',
  r: 'mirror', c: 'combine', a: 'axis', x: 'failed', n: 'plain'
};
const features = 'kkefspmer' + 'ecmpmcmp' + 'mmmppmmpmmppmmcmp' + 'xxanxxnxxxnnn';
const errors = [34, 35, 38, 39, 41, 42, 43];
const warnings = [37, 40];
const current = 8;
const steps = document.getElementById('steps');

[...features].forEach((kind, i) => {
  const step = document.createElement('div');
  step.className = 'step ' + (i <= current ? 'done' : 'faded');
  if (errors.includes(i)) step.classList.add('error');
  if (warnings.includes(i)) step.classList.add('warning');
  step.innerHTML = `<span class="tile"><svg class="i10"><use href="#t-${kinds[kind]}"/></svg></span><span class="tick"></span>` +
    (i === current ? '<svg class="marker" viewBox="0 0 7 18"><path d="M0 0h7v3L4 6v12H3V6L0 3z" fill="#444"/></svg>' : '');
  steps.append(step);
});
```
